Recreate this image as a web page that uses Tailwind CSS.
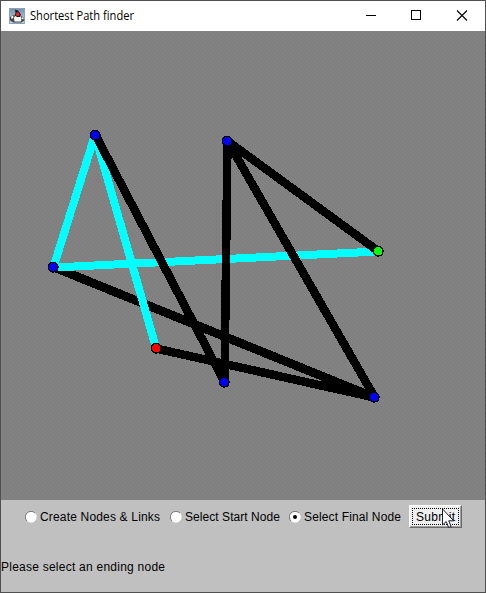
<!DOCTYPE html>
<html lang="en">
<head>
<meta charset="utf-8">
<title>Shortest Path finder</title>
<script src="https://cdn.jsdelivr.net/npm/@tailwindcss/browser@4"></script>
</head>
<body class="w-[486px] h-[593px] overflow-hidden">
<div class="w-[486px] h-[593px] flex flex-col border border-[#4f4f4f] bg-[#c0c0c0]">
  <header class="h-[30px] flex items-center bg-white pl-2 shrink-0">
    <svg class="w-4 h-4 shrink-0" viewBox="0 0 16 16">
      <defs><linearGradient id="sky" x2="0" y2="1"><stop stop-color="#6f8fac"/><stop offset="1" stop-color="#c9d8e3"/></linearGradient></defs>
      <path fill="url(#sky)" d="M0 0h16v16H0z"/>
      <path fill="none" stroke="#8ba1b5" d="M.5.5h15v15H.5z"/>
      <path fill="#444" d="M1 9l3-2 2 1v5l-3 1-2-2zM12 8l3 2v3l-3 1zM4 13h9v1.500H4z"/>
      <path fill="#fafaf6" d="M6 8h5l1.500 2-.5 3.500H5.500L5 10zM2 8.500l2-1 .5 2.500-2 1zM13 9l1.500 1v1.500L13 11z"/>
      <path fill="#1c1c1c" d="M6 1.500l3 1 3 4-1 2.500H8L5.500 7.500 6.500 5z"/>
      <circle cx="8.700" cy="6.200" r="1.900" fill="#e5222b"/>
    </svg>
    <h1 class="ml-[5px] flex-1 whitespace-nowrap"><svg class="block" width="120" height="20"><text x="0" y="14" font-family="Open Sans, sans-serif" font-size="12" textLength="104" lengthAdjust="spacingAndGlyphs">Shortest Path finder</text></svg></h1>
    <svg class="w-[138px] h-[30px] shrink-0" viewBox="0 0 138 30" fill="none" stroke="#000" shape-rendering="crispEdges">
      <path d="M19 14.500h10M64.500 9.500h9v9h-9z"/>
      <path shape-rendering="auto" stroke-width="1.100" d="M110 9.500l10 10M120 9.500l-10 10"/>
    </svg>
  </header>
  <main class="h-[469px] shrink-0 bg-[#828282]">
    <svg class="block" width="484" height="469" viewBox="1 31 484 469" stroke-width="8" shape-rendering="crispEdges">
      <defs><pattern id="dither" width="4" height="4" patternUnits="userSpaceOnUse"><path fill="#7a7a7a" d="M0 0h1v1H0zM2 2h1v1H2z"/></pattern></defs>
      <path fill="url(#dither)" d="M1 31h484v469H1z"/>
      <path stroke="#000" stroke-width="8.800" d="M53.500 267L374.500 397.500"/>
      <path stroke="#0ff" d="M95 135L53.500 267M53.500 267.500L378 251.500M95 135L156 348"/>
      <path stroke="#000" stroke-width="8.500" d="M95.500 135L224.500 382M227.500 141L224.500 382M227.500 141L374.500 397M227.500 141L378 251M156 348.500L374.500 397.500"/>
      <g stroke="#000" stroke-width="1.500" fill="#00f">
        <circle cx="95.200" cy="135.200" r="4.800"/><circle cx="227.200" cy="141.200" r="4.800"/><circle cx="53.200" cy="267.200" r="4.800"/>
        <circle cx="224.200" cy="382.200" r="4.800"/><circle cx="374.200" cy="397.200" r="4.800"/>
        <circle cx="156.200" cy="348.200" r="4.800" fill="#f00"/><circle cx="378.200" cy="251.200" r="4.800" fill="#0f0"/>
      </g>
    </svg>
  </main>
  <section class="relative h-[34px] shrink-0 flex items-center pl-6 text-black">
    <label class="flex items-center w-[145px] shrink-0">
      <svg class="w-3 h-3 shrink-0" viewBox="0 0 12 12"><circle cx="6" cy="6" r="5.700" fill="#fff"/><path d="M2 10A5.500 5.500 0 0 1 10 2" fill="none" stroke="#777"/></svg>
      <svg class="ml-[3px] w-[128px] h-[18px] shrink-0"><text x="0" y="13" font-family="Liberation Sans, Arial, sans-serif" font-size="12" textLength="120">Create Nodes &amp; Links</text></svg>
    </label>
    <label class="flex items-center w-[119px] shrink-0">
      <svg class="w-3 h-3 shrink-0" viewBox="0 0 12 12"><circle cx="6" cy="6" r="5.700" fill="#fff"/><path d="M2 10A5.500 5.500 0 0 1 10 2" fill="none" stroke="#777"/></svg>
      <svg class="ml-[3px] w-[100px] h-[18px] shrink-0"><text x="0" y="13" font-family="Liberation Sans, Arial, sans-serif" font-size="12" textLength="95">Select Start Node</text></svg>
    </label>
    <label class="flex items-center w-[120px] shrink-0">
      <svg class="w-3 h-3 shrink-0" viewBox="0 0 12 12"><circle cx="6" cy="6" r="5.700" fill="#fff"/><path d="M2 10A5.500 5.500 0 0 1 10 2" fill="none" stroke="#777"/><circle cx="6" cy="6" r="2"/></svg>
      <svg class="ml-[3px] w-[102px] h-[18px] shrink-0"><text x="0" y="13" font-family="Liberation Sans, Arial, sans-serif" font-size="12" textLength="97">Select Final Node</text></svg>
    </label>
    <button class="w-[53px] h-[23px] mb-px shrink-0 bg-[#efefef] border border-t-white border-l-white border-b-[#696969] border-r-[#696969] shadow-[inset_-1px_-1px_0_#a0a0a0]">
      <svg class="block" width="51" height="21">
        <path d="M2 2.500h47M2 18.500h47M2.500 2v17M48.500 2v17" stroke="#000" stroke-dasharray="1 1" shape-rendering="crispEdges"/>
        <text x="6" y="15" font-family="Liberation Sans, Arial, sans-serif" font-size="12" textLength="39">Submit</text>
      </svg>
    </button>
    <svg class="absolute left-[440px] top-[8px] w-[14px] h-[21px]" viewBox="0 0 14 21"><path d="M1.500 1v16l3.700-3.500 2.500 6 2.500-1-2.500-5.700h5z" fill="#fff" stroke="#1b1b2b"/></svg>
  </section>
  <footer class="flex-1 pt-[23px]">
    <svg class="block" width="180" height="20"><text x="0" y="14" font-family="Liberation Sans, Arial, sans-serif" font-size="12" textLength="164">Please select an ending node</text></svg>
  </footer>
</div>
</body>
</html>
